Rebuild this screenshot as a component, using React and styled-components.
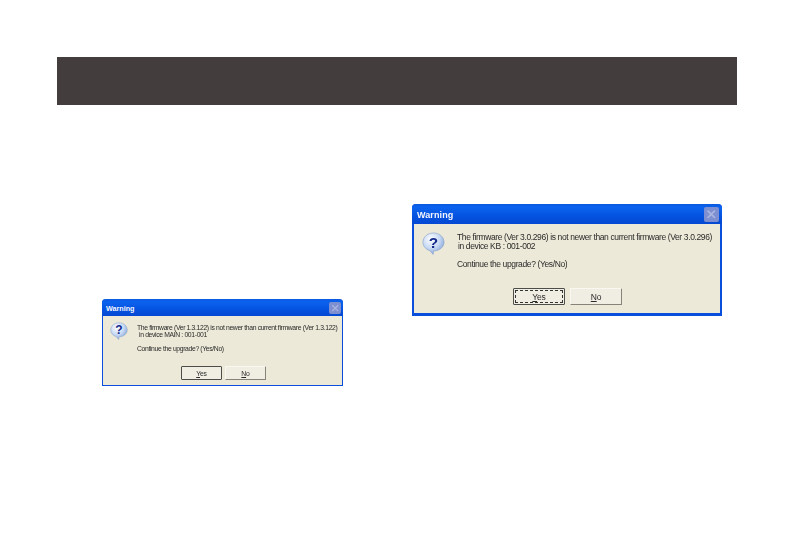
import React from "react";
import styled, { createGlobalStyle } from "styled-components";

const Global = createGlobalStyle`
  html, body { margin: 0; background: #fff; }
  body { font-family: "Liberation Sans", Arial, sans-serif; }
`;

const Page = styled.div`
  width: 794px;
  height: 553px;
  padding-top: 57px;
  box-sizing: border-box;
  overflow: hidden;
  background: #fff;
`;

const Band = styled.div`
  width: 680px;
  height: 48px;
  margin-left: 57px;
  background: #433d3e;
`;

const Columns = styled.div`
  display: flex;
  align-items: flex-start;
  padding-left: 102px;
`;

const Slot = styled.div`
  margin-top: ${(p) => p.$top}px;
  margin-left: ${(p) => p.$left}px;
`;

const Window = styled.div`
  width: ${(p) => (p.$large ? 310 : 241)}px;
  height: ${(p) => (p.$large ? 112 : 87)}px;
  box-sizing: border-box;
  display: flex;
  flex-direction: column;
  background: #ece9d8;
  border: solid #0a4fdc;
  border-width: 0 ${(p) => (p.$large ? 2 : 1)}px ${(p) => (p.$large ? 3 : 1)}px;
  border-radius: 4px 4px 0 0;
  filter: blur(0.5px);
`;

const TitleBar = styled.div`
  height: ${(p) => (p.$large ? 20 : 17)}px;
  flex: none;
  display: flex;
  align-items: center;
  justify-content: space-between;
  box-sizing: border-box;
  padding: ${(p) => (p.$large ? "1px 3px 0 5px" : "1px 2px 0 4px")};
  margin: 0 ${(p) => (p.$large ? -2 : -1)}px;
  border-radius: 4px 4px 0 0;
  background: linear-gradient(180deg, #0a5ae0 0%, #0b62ee 18%, #0453e0 60%, #0448d2 100%);
`;

const Title = styled.span`
  color: #f4f6ff;
  font-weight: 700;
  font-size: ${(p) => (p.$large ? 9 : 7.2)}px;
  letter-spacing: ${(p) => (p.$large ? 0.1 : 0)}px;
`;

const CloseBox = styled.span`
  width: ${(p) => (p.$large ? 15 : 12)}px;
  height: ${(p) => (p.$large ? 15 : 12)}px;
  border-radius: 2px;
  background: #7d8fd0;
  display: flex;
  align-items: center;
  justify-content: center;
`;

const Body = styled.div`
  flex: 1;
  display: flex;
  flex-direction: column;
  padding: ${(p) => (p.$large ? "8px 0 8px 8px" : "6px 0 5px 7px")};
`;

const Message = styled.div`
  display: flex;
  gap: ${(p) => (p.$large ? 12 : 10)}px;
  flex: 1;
`;

const IconWrap = styled.div`
  width: ${(p) => (p.$large ? 23 : 18)}px;
  height: ${(p) => (p.$large ? 23 : 18)}px;
  flex: none;
  & svg { display: block; width: 100%; height: 100%; }
`;

const TextBlock = styled.div`
  font-size: ${(p) => (p.$large ? 8.5 : 6.8)}px;
  letter-spacing: ${(p) => (p.$large ? -0.38 : -0.35)}px;
  line-height: ${(p) => (p.$large ? 9 : 7.5)}px;
  color: #2a2a2a;
  white-space: nowrap;
  padding-top: ${(p) => (p.$large ? 1 : 1.5)}px;
  margin-left: ${(p) => (p.$large ? 0 : -1)}px;
`;

const Line = styled.div`
  padding-left: ${(p) => p.$indent || 0}px;
  margin-top: ${(p) => p.$gap || 0}px;
`;

const Buttons = styled.div`
  display: flex;
  gap: ${(p) => (p.$large ? 5 : 3)}px;
  flex: none;
  margin-left: ${(p) => (p.$large ? 91 : 71)}px;
`;

const Btn = styled.div`
  width: ${(p) => (p.$large ? 52 : 41)}px;
  height: ${(p) => (p.$large ? 17 : 14)}px;
  box-sizing: border-box;
  display: flex;
  align-items: center;
  justify-content: center;
  font-size: ${(p) => (p.$large ? 8.5 : 6.8)}px;
  letter-spacing: ${(p) => (p.$large ? -0.2 : -0.2)}px;
  color: #2a2a2a;
  background: #f0eee3;
  border: 1px solid ${(p) => (p.$focus ? "#4d4d4a" : "#f8f7f0")};
  border-right-color: ${(p) => (p.$focus ? "#4d4d4a" : "#85837a")};
  border-bottom-color: ${(p) => (p.$focus ? "#4d4d4a" : "#85837a")};
  border-radius: 1px;
  position: relative;
`;

const FocusRing = styled.span`
  position: absolute;
  inset: 1px;
  border: 1px dashed #333;
`;

const Icon = ({ id }) => (
  <svg viewBox="0 0 24 24">
    <defs>
      <radialGradient id={id} cx="38%" cy="30%" r="75%">
        <stop offset="0%" stopColor="#ffffff" />
        <stop offset="55%" stopColor="#c7d9f4" />
        <stop offset="100%" stopColor="#7f9fd4" />
      </radialGradient>
    </defs>
    <path
      d="M12 1C5.8 1 1 5.3 1 10.6c0 4.2 3 7.6 7.2 8.9L11.6 23.4l.6-3.6C18.4 19.7 23 15.6 23 10.6 23 5.3 18.2 1 12 1z"
      fill={`url(#${id})`}
      stroke="#8ea6cc"
      strokeWidth="0.7"
    />
    <text
      x="12"
      y="16.6"
      textAnchor="middle"
      fontFamily="Liberation Sans, sans-serif"
      fontWeight="700"
      fontSize="16"
      fill="#14298c"
    >
      ?
    </text>
  </svg>
);

const Dialog = ({ large, first, device }) => (
  <Window $large={large}>
    <TitleBar $large={large}>
      <Title $large={large}>Warning</Title>
      <CloseBox $large={large}>
        <svg width="70%" height="70%" viewBox="0 0 10 10">
          <path d="M1.5 1.5l7 7M8.5 1.5l-7 7" stroke="#aab4e0" strokeWidth="1.6" />
        </svg>
      </CloseBox>
    </TitleBar>
    <Body $large={large}>
      <Message $large={large}>
        <IconWrap $large={large}><Icon id={large ? "bubLarge" : "bubSmall"} /></IconWrap>
        <TextBlock $large={large}>
          <Line>{first}</Line>
          <Line $indent={large ? 1 : 2}>{device}</Line>
          <Line $gap={large ? 9 : 6.5}>Continue the upgrade? (Yes/No)</Line>
        </TextBlock>
      </Message>
      <Buttons $large={large}>
        <Btn $large={large} $focus>
          {large && <FocusRing />}
          <span><u>Y</u>es</span>
        </Btn>
        <Btn $large={large}>
          <span><u>N</u>o</span>
        </Btn>
      </Buttons>
    </Body>
  </Window>
);

export default function App() {
  return (
    <Page>
      <Global />
      <Band />
      <Columns>
        <Slot $top={194} $left={0}>
          <Dialog
            first="The firmware (Ver 1.3.122) is not newer than current firmware (Ver 1.3.122)"
            device="in device MAIN : 001-001"
          />
        </Slot>
        <Slot $top={99} $left={69}>
          <Dialog
            large
            first="The firmware (Ver 3.0.296) is not newer than current firmware (Ver 3.0.296)"
            device="in device KB : 001-002"
          />
        </Slot>
      </Columns>
    </Page>
  );
}
